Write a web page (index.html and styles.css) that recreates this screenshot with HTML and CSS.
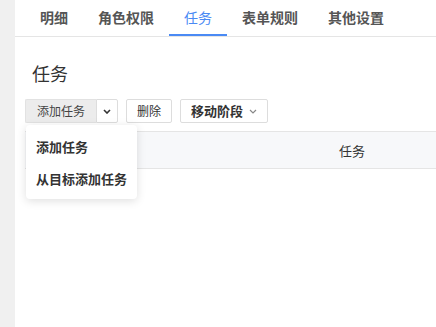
FILE: index.html
```html
<!DOCTYPE html>
<html lang="zh-CN">
<head>
	<meta charset="UTF-8">
	<title>任务</title>
	<link rel="stylesheet" href="styles.css">
</head>
<body>
	<div class="side"></div>
	<div class="main">
		<ul class="tabs">
			<li>明细</li>
			<li>角色权限</li>
			<li class="on">任务</li>
			<li>表单规则</li>
			<li>其他设置</li>
		</ul>
		<div class="content">
			<h2 class="title">任务</h2>
			<div class="toolbar">
				<div class="split">
					<span class="split-main">添加任务</span>
					<span class="split-caret">
						<svg width="8" height="5" viewBox="0 0 8 5"><path d="M1 1l3 3 3-3" fill="none" stroke="#333" stroke-width="1.6"/></svg>
					</span>
					<ul class="menu">
						<li>添加任务</li>
						<li>从目标添加任务</li>
					</ul>
				</div>
				<span class="btn">删除</span>
				<span class="btn btn-bold">移动阶段
					<svg width="8" height="5" viewBox="0 0 8 5"><path d="M1 1l3 3 3-3" fill="none" stroke="#888" stroke-width="1.2"/></svg>
				</span>
			</div>
			<div class="thead">
				<span class="th">任务</span>
			</div>
		</div>
	</div>
</body>
</html>
```

FILE: styles.css
```css
*{margin:0; padding:0; box-sizing:border-box;}
li{list-style:none;}
body{display:flex; height:100vh; overflow:hidden; font-family:"Noto Sans CJK SC","Noto Sans",sans-serif; color:#333; background:#fff;}

.side{width:15px; flex:none; background:#f0f0f0;}
.main{flex:1; min-width:0;}

.tabs{display:flex; padding-left:10px; border-bottom:1px solid #e5e5e5;}
.tabs li{height:36px; line-height:34px; padding:0 15px; font-size:14px; font-weight:600; color:#555; border-bottom:2px solid transparent;}
.tabs li.on{color:#4a8af4; font-weight:400; border-bottom-color:#4a8af4;}

.content{padding-left:10px;}
.title{padding:23px 0 0 7px; font-size:18px; line-height:26px; font-weight:400; color:#333;}

.toolbar{display:flex; align-items:center; gap:8px; margin-top:13px;}
.split{display:flex; position:relative;}
.split-main{height:24px; line-height:22px; padding:0 11px; font-size:12px; color:#444; background:#ececec; border:1px solid #e2e2e2; border-right:none; border-radius:2px 0 0 2px;}
.split-caret{display:flex; align-items:center; justify-content:center; width:22px; height:24px; border:1px solid #ddd; border-radius:0 2px 2px 0; background:#fff;}
.btn{display:flex; align-items:center; gap:6px; height:24px; line-height:22px; padding:0 10px; font-size:12px; color:#333; border:1px solid #ddd; border-radius:2px; background:#fff;}
.btn-bold{font-size:13px; font-weight:600; padding:0 10px;}

.menu{position:absolute; left:1px; top:26px; width:111px; padding:6px 0 4px; background:#fff; border-radius:4px; box-shadow:0 2px 10px rgba(0,0,0,.13); z-index:2;}
.menu li{line-height:32px; padding-left:10px; font-size:13px; font-weight:600; color:#333; white-space:nowrap;}

.thead{display:flex; margin-top:8px; height:38px; background:#f7f8fa; border-top:1px solid #e5e5e5; border-bottom:1px solid #e5e5e5; align-items:center;}
.th{margin-left:314px; font-size:13px; color:#333;}
```
